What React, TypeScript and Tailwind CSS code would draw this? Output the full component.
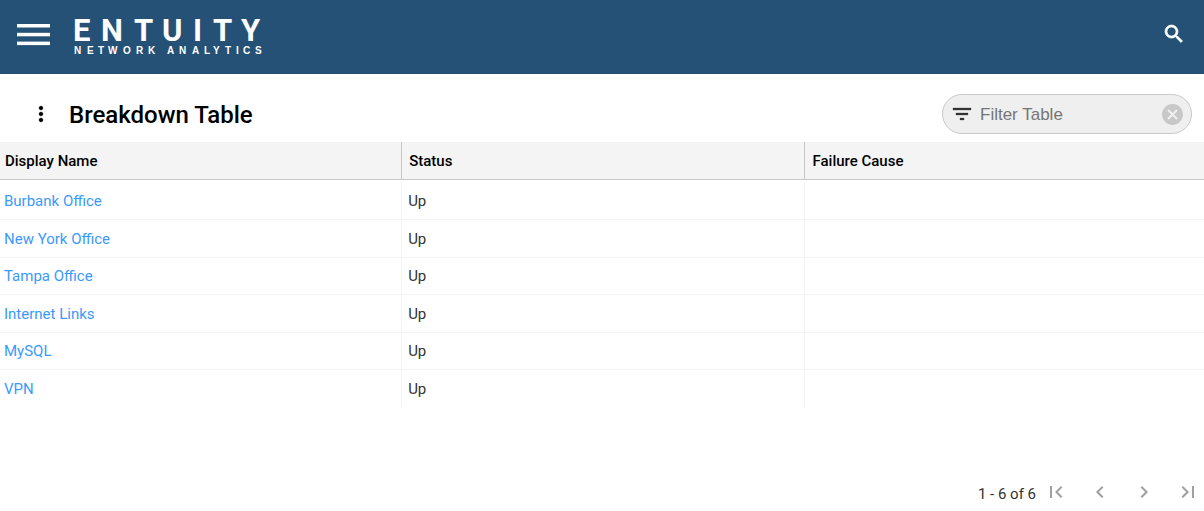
import React from 'react';
import {
    MdCancel,
    MdChevronLeft,
    MdChevronRight,
    MdFilterList,
    MdFirstPage,
    MdLastPage,
    MdMoreVert,
    MdSearch,
} from 'react-icons/md';

const rows = [
    { name: 'Burbank Office', status: 'Up', cause: '' },
    { name: 'New York Office', status: 'Up', cause: '' },
    { name: 'Tampa Office', status: 'Up', cause: '' },
    { name: 'Internet Links', status: 'Up', cause: '' },
    { name: 'MySQL', status: 'Up', cause: '' },
    { name: 'VPN', status: 'Up', cause: '' },
];

// the first path of these icons is an empty bounding box, so only the last one gets the stroke
const heavyIcon = '[&>path:last-child]:stroke-current [&>path:last-child]:stroke-[0.7]';
const mediumIcon = '[&>path:last-child]:stroke-current [&>path:last-child]:stroke-[0.3]';

const Logo = () => (
    <svg
        width="196"
        height="56"
        viewBox="0 0 196 56"
        fill="white"
        className="font-[Roboto,sans-serif] font-bold"
        role="img"
        aria-label="Entuity Network Analytics"
    >
        <text x="1 29 62 90 121 141 169" y="32" fontSize="31">ENTUITY</text>
        <text x="2 15 26 36 51 64 76 88 95 107 120 132 141 153 164 171 183" y="45" fontSize="10" className="font-['Liberation_Sans',Arial,sans-serif]">NETWORK ANALYTICS</text>
    </svg>
);

const Header = () => (
    <header className="flex items-center h-[74px] bg-[#255176] pl-4 pr-[18px] text-white">
        <button type="button" aria-label="Menu" className="mr-[22px] pb-1">
            <svg width="34" height="24" viewBox="0 0 34 24" fill="currentColor">
                <rect x="1" y="1" width="33" height="3.5" />
                <rect x="1" y="9.8" width="33" height="3.5" />
                <rect x="1" y="18.6" width="33" height="3.5" />
            </svg>
        </button>
        <Logo />
        <button type="button" aria-label="Search" className="ml-auto pb-1.5">
            <MdSearch size={24} className={heavyIcon} />
        </button>
    </header>
);

const Toolbar = () => (
    <div className="flex items-center h-[68px] pl-[29px] pr-3 pt-3">
        <button type="button" aria-label="More options" className="text-black">
            <MdMoreVert size={24} className={mediumIcon} />
        </button>
        <h1 className="ml-4 pt-0.5 text-2xl font-medium text-black">Breakdown Table</h1>
        <div className="ml-auto flex items-center w-[250px] h-10 pl-[7px] pr-1.5 rounded-full border border-[#c8c8c8] bg-[#efefef]">
            <MdFilterList size={24} className={`shrink-0 text-[#333] ${mediumIcon}`} />
            <input
                type="text"
                aria-label="Filter Table"
                placeholder="Filter Table"
                className="flex-1 min-w-0 pl-1.5 pt-0.5 bg-transparent outline-none font-['Liberation_Sans',Arial,sans-serif] text-[17px] text-[#333] placeholder:text-[#757575]"
            />
            <button type="button" aria-label="Clear filter" className="shrink-0 text-[#c8c8c8]">
                <MdCancel size={25} />
            </button>
        </div>
    </div>
);

const BreakdownTable = () => (
    <table className="w-full table-fixed border-separate border-spacing-0 text-[15px] leading-5">
        <colgroup>
            <col className="w-[33.4%]" />
            <col className="w-[33.5%]" />
            <col />
        </colgroup>
        <thead>
            <tr className="h-[38px] bg-[#f4f4f4] text-left text-black">
                <th scope="col" className="pl-[5px] py-0 font-medium border-r border-b border-[#c8c8c8]">Display Name</th>
                <th scope="col" className="pl-[7px] py-0 font-medium border-r border-b border-[#c8c8c8]">Status</th>
                <th scope="col" className="pl-[7px] py-0 font-medium border-b border-[#c8c8c8]">Failure Cause</th>
            </tr>
            <tr className="h-[2px]" aria-hidden="true">
                <td colSpan={3} className="p-0" />
            </tr>
        </thead>
        <tbody>
            {rows.map((row) => (
                <tr key={row.name} className="group h-[38px] nth-3:h-[37px] nth-5:h-[37px]">
                    <td className="pl-1 py-0 border-r border-b border-[#f4f4f4] group-last:border-b-0">
                        <a href="#" className="text-[#3b99fc]">{row.name}</a>
                    </td>
                    <td className="pl-1.5 py-0 border-r border-b border-[#f4f4f4] group-last:border-b-0">{row.status}</td>
                    <td className="pl-1.5 py-0 border-b border-[#f4f4f4] group-last:border-b-0">{row.cause}</td>
                </tr>
            ))}
        </tbody>
    </table>
);

const Pagination = () => (
    <nav aria-label="Pagination" className="flex items-center justify-end gap-5 mt-[72px] pr-1 text-[#a0a0a0]">
        <span className="-mr-3 pt-1 text-[15px] leading-5 text-[#333]">1 - 6 of 6</span>
        <button type="button" aria-label="First page">
            <MdFirstPage size={24} />
        </button>
        <button type="button" aria-label="Previous page">
            <MdChevronLeft size={24} />
        </button>
        <button type="button" aria-label="Next page">
            <MdChevronRight size={24} />
        </button>
        <button type="button" aria-label="Last page">
            <MdLastPage size={24} />
        </button>
    </nav>
);

const App = () => {
    return (
        <div className="bg-white font-[Roboto,sans-serif] text-[#333]">
            <Header />
            <main>
                <Toolbar />
                <BreakdownTable />
                <Pagination />
            </main>
        </div>
    );
};

export default App;
